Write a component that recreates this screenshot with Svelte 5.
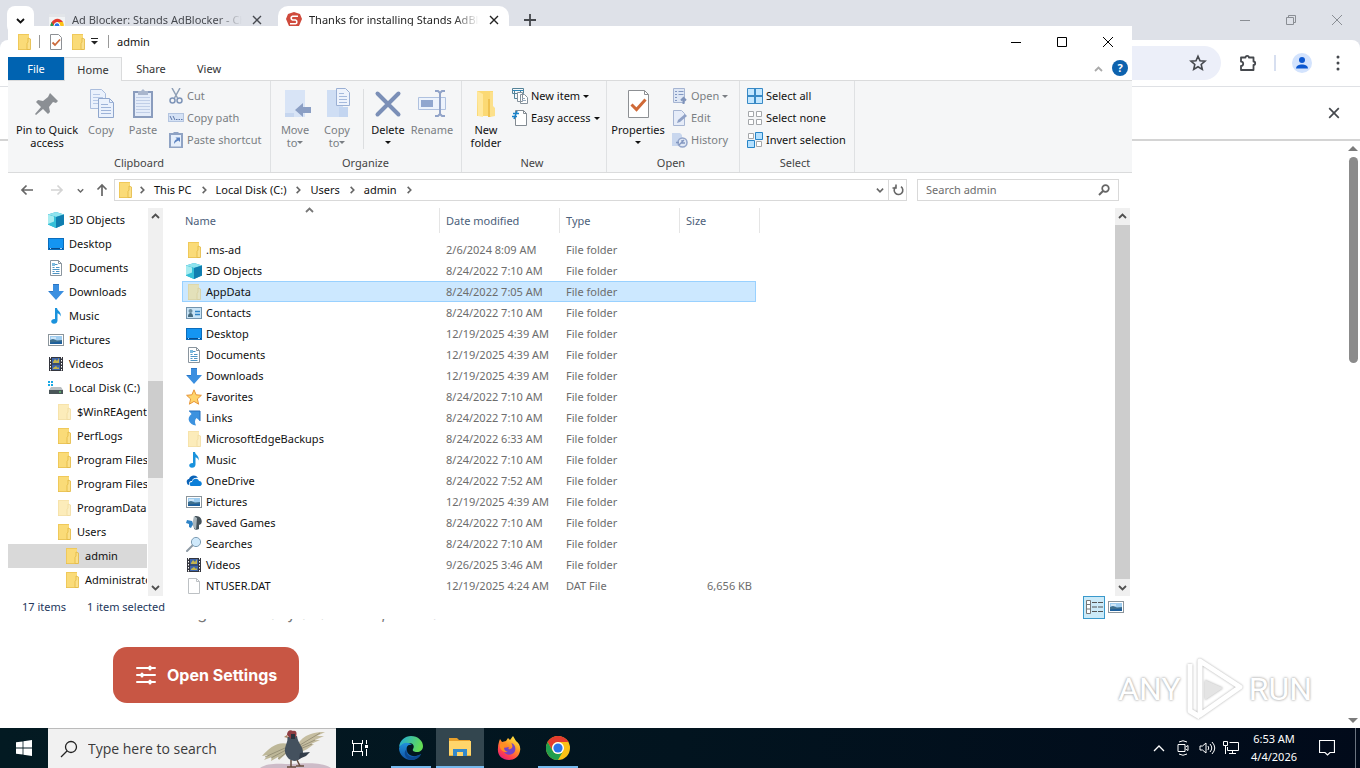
<script>
  const tree = [
    { name: '3D Objects', icon: 'cube', level: 0 },
    { name: 'Desktop', icon: 'desktop', level: 0 },
    { name: 'Documents', icon: 'document', level: 0 },
    { name: 'Downloads', icon: 'download', level: 0 },
    { name: 'Music', icon: 'music', level: 0 },
    { name: 'Pictures', icon: 'picture', level: 0 },
    { name: 'Videos', icon: 'video', level: 0 },
    { name: 'Local Disk (C:)', icon: 'disk', level: 0 },
    { name: '$WinREAgent', icon: 'paleFolder', level: 1 },
    { name: 'PerfLogs', icon: 'folder', level: 1 },
    { name: 'Program Files', icon: 'folder', level: 1 },
    { name: 'Program Files (x86)', icon: 'folder', level: 1 },
    { name: 'ProgramData', icon: 'paleFolder', level: 1 },
    { name: 'Users', icon: 'folder', level: 1 },
    { name: 'admin', icon: 'folder', level: 2 },
    { name: 'Administrator', icon: 'folder', level: 2 }
  ];

  const files = [
    ['.ms-ad', 'folder', '2/6/2024 8:09 AM'],
    ['3D Objects', 'cube', '8/24/2022 7:10 AM'],
    ['AppData', 'paleFolder', '8/24/2022 7:05 AM'],
    ['Contacts', 'contact', '8/24/2022 7:10 AM'],
    ['Desktop', 'desktop', '12/19/2025 4:39 AM'],
    ['Documents', 'document', '12/19/2025 4:39 AM'],
    ['Downloads', 'download', '12/19/2025 4:39 AM'],
    ['Favorites', 'star', '8/24/2022 7:10 AM'],
    ['Links', 'link', '8/24/2022 7:10 AM'],
    ['MicrosoftEdgeBackups', 'paleFolder', '8/24/2022 6:33 AM'],
    ['Music', 'music', '8/24/2022 7:10 AM'],
    ['OneDrive', 'cloud', '8/24/2022 7:52 AM'],
    ['Pictures', 'picture', '12/19/2025 4:39 AM'],
    ['Saved Games', 'games', '8/24/2022 7:10 AM'],
    ['Searches', 'search', '8/24/2022 7:10 AM'],
    ['Videos', 'video', '9/26/2025 3:46 AM'],
    ['NTUSER.DAT', 'blank', '12/19/2025 4:24 AM', 'DAT File', '6,656 KB']
  ];

  const crumbs = ['This PC', 'Local Disk (C:)', 'Users', 'admin'];
  let selectedFile = $state('AppData');
  let selectedNode = $state('admin');
</script>

{#snippet icon(name)}
  <svg class="i16" viewBox="0 0 16 16" aria-hidden="true">
    {#if name === 'folder' || name === 'paleFolder'}
      <g opacity={name === 'folder' ? 1 : 0.5}>
        <path d="M2 0h11v16H2z" fill="#fadb78" />
        <path d="M2.500 0v16M2 .5h11" stroke="#f0c95a" fill="none" />
        <path d="M11 9.500l1-1.500V4l2.500 1v10.500H11z" fill="#fbe08a" stroke="#e2b740" stroke-width=".8" />
        <path d="M2 15.600h12" stroke="#e5bd4d" stroke-width=".8" />
      </g>
    {:else if name === 'cube'}
      <path d="M8 0l8 2.500v10L8 16l-8-3.500v-10z" fill="#20a9cf" />
      <path d="M0 2.500L8 0l8 2.500L8 5z" fill="#8fe3ee" />
      <path d="M0 2.500L8 5v11l-8-3.500z" fill="#35c0d8" />
      <path d="M8 5l8-2.500v10L8 16z" fill="#107eb0" />
      <path d="M0 2.500l6 2v5L0 12z" fill="#a7ecf0" />
    {:else if name === 'desktop'}
      <rect x=".5" y="2.500" width="15" height="11" fill="#1495f2" stroke="#0b6dbc" />
      <path d="M1 12.500h14" stroke="#0a4c8c" />
      <path d="M2 12.500h1M12 12.500h2" stroke="#9fd4ff" />
    {:else if name === 'document'}
      <path d="M2.500 .5h8l3 3v12h-11z" fill="#fff" stroke="#8a959e" />
      <path d="M10.500 .5v3h3" fill="none" stroke="#8a959e" />
      <path d="M7 4.500h2.500M4.500 7.500h2M8 7.500h3.500M4.500 9.500h7M4.500 11.500h2M8 11.500h3.500M4.500 13.500h7" stroke="#4d94c4" />
      <path d="M4 3h3v3H4z" fill="#7cbbe0" />
    {:else if name === 'download'}
      <path d="M5 0h6v7h5l-8 9-8-9h5z" fill="#3b8fe0" />
      <path d="M5 .5h6M1 7.500h4" stroke="#2a75c4" />
    {:else if name === 'music'}
      <path d="M7 0h2c.3 3 4.600 3.600 3.600 8.600-.6-2-1.600-3-3.100-3.400v7.300c0 2-1.500 3.300-3.500 3.300-1.800 0-2.800-1-2.800-2.200 0-1.600 1.800-2.800 3.800-2.400z" fill="#1a92dc" />
    {:else if name === 'picture'}
      <rect x=".5" y="2.500" width="15" height="11" fill="#fff" stroke="#8b959c" />
      <path d="M2 4h12v8H2z" fill="#9fcdf0" />
      <path d="M2 8l3-1 4 1.500 5-.5v4H2z" fill="#3f6f8d" />
      <path d="M2 10.500l12-1V12H2z" fill="#1d5f9c" />
      <path d="M3 6h5" stroke="#fff" />
    {:else if name === 'video'}
      <path d="M1 1h14v14H1z" fill="#33353d" />
      <path d="M2.500 1v14M13.500 1v14" stroke="#fff" stroke-dasharray="1.500 1.500" />
      <path d="M4 2h8v5.500H4zM4 8.500h8V14H4z" fill="#3d65ad" />
      <path d="M5 6l2-3 2 2 2-3v5H5zM5 12l3-2 2 2 1-1v2H5z" fill="#c3b44d" />
    {:else if name === 'disk'}
      <path d="M0 1h2v2H0zM3 1h2v2H3zM0 4h2v2H0zM3 4h2v2H3z" fill="#19a9e5" />
      <path d="M3 7h10l2 3H1z" fill="#b9bec1" />
      <path d="M1 10h14v4H1z" fill="#4a5558" />
      <path d="M11 12h2" stroke="#69ee78" />
    {:else if name === 'contact'}
      <rect x=".5" y="2.500" width="15" height="11" fill="#c9e4f6" stroke="#7394ad" />
      <path d="M2 12c0-3 1-4 2.500-4S7 9 7 12z" fill="#466b80" />
      <circle cx="4.500" cy="6" r="2" fill="#6d8fa2" />
      <path d="M9 6.500h5M9 9.500h5" stroke="#2f83c6" stroke-width="1.500" />
    {:else if name === 'star'}
      <path d="M8 .8l2.100 5 5.300.5-4 3.600 1.200 5.300L8 12.400l-4.600 2.800 1.200-5.300-4-3.600 5.300-.5z" fill="#ffd46c" stroke="#e6953a" />
    {:else if name === 'link'}
      <path d="M3 1h11v10l-3.500-3c-1.800 1.600-2 4.500-.5 7.500C3 14.500 0 8.500 5.500 4z" fill="#3c92df" />
      <path d="M3 1h11v10" fill="none" stroke="#2471c0" />
    {:else if name === 'cloud'}
      <path d="M1 10c-1-3 1-4 2-4 1-4 7-5 9-1-3-1-6 1-6 3-3 0-3 2-3 4-1 0-2-1-2-2z" fill="#0a63b8" />
      <path d="M5 13c-2-1-2-4 1-4 1-4 6-4 7-1 3 0 4 4 1 5z" fill="#0c7fd8" />
    {:else if name === 'games'}
      <path d="M9 1c6-1 8 5 6 8l-2 1v4c-3 2-6 0-5-3z" fill="#45525a" />
      <path d="M8 1l3 2-1 12-4-5z" fill="#a9b6bd" />
      <path d="M1 5l5 1 1 3-2 4-2-1V9L0 8z" fill="#2f83c6" />
    {:else if name === 'search'}
      <path d="M1 15l6-6" stroke="#8d9aa5" stroke-width="2" stroke-linecap="round" />
      <circle cx="10" cy="6" r="4.600" fill="#cfe9fb" stroke="#7e9db4" />
    {:else if name === 'blank'}
      <path d="M2.500 .5h8l3 3v12h-11z" fill="#fff" stroke="#bdc1c4" />
      <path d="M10.500 .5v3h3" fill="none" stroke="#bdc1c4" />
    {:else if name === 'properties'}
      <path d="M2.500 .5h8l3 3v12h-11z" fill="#fff" stroke="#8d9094" />
      <path d="M4.500 8.500L7 11l5-5.500" fill="none" stroke="#cb6b3c" stroke-width="1.800" />
    {:else if name === 'cut'}
      <path d="M4 0l5.500 10M12 0L6.500 10" stroke="#8e9fb5" stroke-width="1.500" />
      <circle cx="4.500" cy="12.500" r="2.500" fill="none" stroke="#7f95b8" stroke-width="1.500" />
      <circle cx="11.500" cy="12.500" r="2.500" fill="none" stroke="#7f95b8" stroke-width="1.500" />
    {:else if name === 'path'}
      <rect x=".5" y="3.500" width="15" height="8" fill="#d5e2f5" stroke="#b4c5e0" />
      <path d="M2 6l2 4M5 6l2 4M8 9.500h1.500M10.500 9.500H12M13 9.500h1.500" stroke="#5c76a8" />
    {:else if name === 'shortcut'}
      <path d="M2 2h12v13.500H2z" fill="#e6effb" stroke="#8fa3c4" stroke-width="2" />
      <path d="M5.500 0h5v3h-5z" fill="#8fa3c4" />
      <path d="M6 12c0-3 1-4 3-5L7.500 5.500H12V10l-1.500-1.500C8 9.500 7.500 10 6 12z" fill="#5b82c0" />
    {:else if name === 'newItem'}
      <path d="M.5 .5h11v5H.5zM2.500 2.500h6v8h-6z" fill="#f5f8fb" stroke="#558398" />
      <path d="M1 2.500h10" stroke="#2c86b8" />
      <path d="M5.500 4.500h5v9h-5zM8.500 6.500h4l3 3v6h-7z" fill="#fff" stroke="#85919b" />
      <path d="M10 10.500h3M10 12.500h4" stroke="#96a8bb" />
    {:else if name === 'easy'}
      <path d="M3.500 .5h8l3 3v12h-11z" fill="#fff" stroke="#838b92" />
      <path d="M11.500 .5v3h3" fill="none" stroke="#838b92" />
      <path d="M1 3.500h6M0 6.500h5M5 1L2 9" stroke="#1a82c9" stroke-width="1.500" />
    {:else if name === 'openDoc'}
      <path d="M1.500 .5h11v14h-11z" fill="#dee7f5" stroke="#a6b5d2" />
      <path d="M3 3.500h2M3 6.500h2M3 9.500h2M3 12.500h2M6.500 3.500h5M6.500 6.500h5" stroke="#8398c2" />
      <path d="M11.500 16v-6M9 12.500L11.500 10l2.500 2.500" fill="none" stroke="#7f93ba" stroke-width="2" />
    {:else if name === 'edit'}
      <path d="M1.500 .5h8l3 3v12h-11z" fill="#e6ecf8" stroke="#a6b5d2" />
      <path d="M5 13l1-3 7-6 2 2-7 6z" fill="#8fa1c6" />
    {:else if name === 'history'}
      <path d="M0 1h8l2 2v11H0z" fill="#c9d7ee" />
      <circle cx="10.500" cy="10.500" r="4.500" fill="#e0e8f5" stroke="#93a5ca" stroke-width="1.500" />
      <path d="M4 10.500h3M10 8v3h3M12 8l-5 5" stroke="#8397c0" fill="none" stroke-width="1.300" />
    {:else if name === 'selectAll'}
      <path d="M.5 .5h15v15H.5z" fill="#c3e7ff" stroke="#3889c5" />
      <path d="M8 1v14M1 8h14" stroke="#3889c5" stroke-width="2" />
    {:else if name === 'selectNone'}
      <path d="M1.500 1.500h5v5h-5zM9.500 1.500h5v5h-5zM1.500 9.500h5v5h-5zM9.500 9.500h5v5h-5z" fill="#fff" stroke="#a4a7aa" />
    {:else if name === 'invert'}
      <path d="M1.500 1.500h5v5h-5zM9.500 9.500h5v5h-5z" fill="#fff" stroke="#a4a7aa" />
      <path d="M8.500 .5h7v7h-7zM.5 8.500h7v7h-7z" fill="#b5e1ff" stroke="#2784c7" />
    {/if}
  </svg>
{/snippet}

{#snippet bigIcon(name)}
  <svg class="i32" viewBox="0 0 32 32" aria-hidden="true">
    {#if name === 'pin'}
      <path d="M19 5l8 8-2 2-3-1-4 5 1 5-2 2-5-5-7 6-1-1 6-7-5-5 2-2 5 1 5-4z" fill="#8b8f94" />
    {:else if name === 'copy'}
      <path d="M5.500 1.500h11l4 4v15h-15z" fill="#eaf1fc" stroke="#aabddd" />
      <path d="M8 6.500h7M8 9.500h10M8 12.500h10M8 15.500h10" stroke="#b6c8e6" />
      <path d="M13.500 10.500h11l4 4v15h-15z" fill="#eaf1fc" stroke="#8fa6cc" />
      <path d="M24.500 10.500v4h4M16 16.500h7M16 19.500h10M16 22.500h10M16 25.500h10" stroke="#9db3d8" fill="none" />
    {:else if name === 'paste'}
      <path d="M7 4h18v25H7z" fill="#e4ecf9" stroke="#8a9cbd" stroke-width="2" />
      <path d="M11 3h3l2-2 2 2h3v4H11z" fill="#a9b6cd" />
      <path d="M9 9.500h14M9 12.500h14M9 15.500h14M9 18.500h14M9 21.500h14M9 24.500h14" stroke="#c0cee7" />
    {:else if name === 'move'}
      <path d="M6 2h20v27H6z" fill="#d8e4f6" />
      <path d="M6 25h9v4H6z" fill="#c6d6ef" />
      <path d="M16 22l8-7v4h8v6h-8v4z" fill="#8b9fc4" />
    {:else if name === 'copyTo'}
      <path d="M6 2h16v27H6z" fill="#cfdef4" />
      <path d="M15.500 .5h9l4 4v13h-13z" fill="#eef3fc" stroke="#9bb0d4" />
      <path d="M18 5.500h5M18 8.500h8M18 11.500h8M18 14.500h8" stroke="#a5badd" />
      <path d="M18 19h9v10H18z" fill="#c3d5f0" />
    {:else if name === 'delete'}
      <path d="M5.500 5.500l21 21M26.500 5.500l-21 21" stroke="#7b8fb7" stroke-width="4" stroke-linecap="round" />
    {:else if name === 'rename'}
      <path d="M2.500 9.500h27v12h-27z" fill="#edf3fc" stroke="#afc1df" />
      <path d="M5 12h12v7H5z" fill="#91a7cf" />
      <path d="M19 3h3l2 2 2-2h3M19 28h3l2-2 2 2h3M24 5v21" fill="none" stroke="#91a3c8" stroke-width="2" />
    {:else if name === 'newFolder'}
      <path d="M7 3h16v25H7z" fill="#fbd974" />
      <path d="M7 3l6 3v23l-5-1z" fill="#ffe89e" />
      <path d="M18 11h3v18h-3z" fill="#efc251" />
      <path d="M20 4h3v14l2 2v8l-5 1z" fill="#fce08b" />
    {:else if name === 'properties'}
      <path d="M6.500 2.500h16l4 4v23h-20z" fill="#fff" stroke="#8d9094" />
      <path d="M22.500 2.500v4h4" fill="none" stroke="#8d9094" />
      <path d="M9.500 16.500l5 5 9-10" fill="none" stroke="#cf6937" stroke-width="3" />
    {/if}
  </svg>
{/snippet}

{#snippet cross(size)}
  <svg width={size} height={size} viewBox="0 0 10 10" aria-hidden="true"><path d="M1 1l8 8M9 1L1 9" stroke="currentColor" stroke-width="1.400" /></svg>
{/snippet}

{#snippet chev(dir)}
  <svg class="chev {dir}" width="9" height="9" viewBox="0 0 9 9" aria-hidden="true"><path d="M1 3l3.500 3.500L8 3" fill="none" stroke="currentColor" stroke-width="1.800" /></svg>
{/snippet}

{#snippet big(name, first, second, off, arrow)}
  <button class="big" class:off aria-label={[first, second].filter(Boolean).join(' ')}>
    {@render bigIcon(name)}
    <span>{first}</span>
    {#if second || arrow}
      <span>{second}{#if arrow}<i class="tri"></i>{/if}</span>
    {/if}
  </button>
{/snippet}

{#snippet small(name, text, off, arrow)}
  <button class="small" class:off>{@render icon(name)}<span>{text}</span>{#if arrow}<i class="tri"></i>{/if}</button>
{/snippet}

{#snippet chromeLogo(size)}
  <svg width={size} height={size} viewBox="0 0 24 24" aria-hidden="true">
    <circle cx="12" cy="12" r="12" fill="#fbc116" />
    <path d="M1.600 6A12 12 0 0 1 22.400 6H12a6 6 0 0 0-5.200 9z" fill="#e33b2e" />
    <path d="M1.600 6A12 12 0 0 0 12 24l5.200-9A6 6 0 0 1 6.800 15z" fill="#229e4d" />
    <circle cx="12" cy="12" r="6" fill="#fff" />
    <circle cx="12" cy="12" r="4.600" fill="#2b74e8" />
  </svg>
{/snippet}

<div class="desktop">
  <section class="browser" aria-label="Browser">
    <div class="tabstrip">
      <button class="tabsearch" aria-label="Search tabs">{@render chev('down')}</button>
      <div class="tab">
        <svg width="16" height="16" viewBox="0 0 16 16" aria-hidden="true">
          <path d="M0 2h16v14H0z" fill="#f1f3f5" />
          <path d="M0 2h16v3H0z" fill="#e2e5e9" />
          <path d="M2 16a6.500 6.500 0 0 1 .8-6A6.500 6.500 0 0 1 14 10H8z" fill="#e33b2e" />
          <path d="M2 16a6.500 6.500 0 0 1 .6-6L6 16z" fill="#229e4d" />
          <path d="M9 10h5a6.500 6.500 0 0 1 .2 6H10z" fill="#fbc116" />
          <circle cx="8" cy="13.500" r="2.800" fill="#2b74e8" stroke="#fff" />
        </svg>
        <span class="tabtitle">Ad Blocker: Stands AdBlocker - Chrome</span>
        <button aria-label="Close tab">{@render cross(10)}</button>
      </div>
      <div class="tab active">
        <svg width="16" height="16" viewBox="0 0 16 16" aria-hidden="true">
          <path d="M8 0l6 2 2 5-3 7-5 2-5-2-3-7 2-5z" fill="#cf4a3c" />
          <path d="M12 4.200H6.500a2 2 0 0 0 0 3.800h3a2 2 0 0 1 0 3.800H4" fill="none" stroke="#fff" stroke-width="1.600" />
        </svg>
        <span class="tabtitle">Thanks for installing Stands AdBlocker</span>
        <button aria-label="Close tab">{@render cross(10)}</button>
      </div>
      <button class="newtab" aria-label="New tab"><svg width="12" height="12" viewBox="0 0 12 12"><path d="M6 0v12M0 6h12" stroke="currentColor" stroke-width="1.800" /></svg></button>
      <div class="controls">
        <button aria-label="Minimize"><svg width="12" height="12" viewBox="0 0 12 12"><path d="M1 6.500h10" stroke="currentColor" /></svg></button>
        <button aria-label="Restore"><svg width="12" height="12" viewBox="0 0 12 12"><path d="M1.500 3.500h7v7h-7zM3.500 3.500v-2h7v7h-2" fill="none" stroke="currentColor" /></svg></button>
        <button aria-label="Close"><svg width="12" height="12" viewBox="0 0 12 12"><path d="M1 1l10 10M11 1L1 11" stroke="currentColor" /></svg></button>
      </div>
    </div>
    <div class="toolbar">
      <div class="omnibox">
        <button aria-label="Bookmark this tab"><svg width="18" height="18" viewBox="0 0 18 18"><path d="M9 2.200l2 4.600 5 .4-3.800 3.300 1.100 4.900L9 12.800l-4.300 2.600 1.100-4.900L2 7.200l5-.4z" fill="none" stroke="currentColor" stroke-width="1.600" /></svg></button>
      </div>
      <button class="tool" aria-label="Extensions"><svg width="18" height="18" viewBox="0 0 18 18"><path d="M2 3.500h4.500a1.700 1.700 0 0 1 3.400 0H14.500v4a1.700 1.700 0 0 1 0 3.400V16H2v-4a2.200 2.200 0 0 0 0-4.400z" fill="none" stroke="currentColor" stroke-width="1.800" stroke-linejoin="round" /></svg></button>
      <span class="divider"></span>
      <button class="avatar" aria-label="Profile"><svg width="20" height="20" viewBox="0 0 20 20"><circle cx="10" cy="10" r="10" fill="#d3e3fd" /><circle cx="10" cy="7" r="3" fill="#0b57d0" /><path d="M4 15.500c0-5.500 12-5.500 12 0z" fill="#0b57d0" /></svg></button>
      <button class="tool" aria-label="Menu"><svg width="4" height="16" viewBox="0 0 4 16"><path d="M2 2h0M2 8h0M2 14h0" stroke="currentColor" stroke-width="3" stroke-linecap="round" /></svg></button>
    </div>
    <div class="banner"><button aria-label="Dismiss">{@render cross(12)}</button></div>
    <div class="page">
      <main>
        <p>Customizing this is easy at all times, even at home</p>
        <button class="cta">
          <svg width="22" height="20" viewBox="0 0 22 20" aria-hidden="true"><path d="M2 3h18M2 10h18M2 17h18" stroke="#fff" stroke-width="2" stroke-linecap="round" /><path d="M15 2v2M7 9v2M15 16v2" stroke="#fff" stroke-width="3" stroke-linecap="round" /></svg>
          <span>Open Settings</span>
        </button>
      </main>
      <div class="watermark" aria-label="ANY RUN">
        <span>ANY</span>
        <svg width="60" height="66" viewBox="0 0 60 66" aria-hidden="true">
          <g fill="none" stroke="#fff" stroke-width="5" stroke-linejoin="round"><path d="M15 5l40 26-40 28z" /><path d="M5 8v47l10 6" /><path d="M20 24l18 8-18 12z" fill="#e4e4e4" stroke="none" /></g>
        </svg>
        <span>RUN</span>
      </div>
      <div class="pagescroll"><i class="up"></i><b></b><i class="dn"></i></div>
    </div>
  </section>

  <section class="explorer" aria-label="File Explorer">
    <header class="titlebar">
      {@render icon('folder')}<span class="bar"></span>
      <button aria-label="Properties">{@render icon('properties')}</button>
      <button aria-label="New folder">{@render icon('folder')}</button>
      <button class="qat" aria-label="Customize toolbar"><svg width="9" height="9" viewBox="0 0 9 9"><path d="M1 1.500h7" stroke="#222" /><path d="M1 4h7L4.500 7.500z" fill="#222" /></svg></button>
      <span class="bar"></span>
      <h1>admin</h1>
      <div class="controls">
        <button aria-label="Minimize"><svg width="12" height="12" viewBox="0 0 12 12"><path d="M1 6.500h10" stroke="currentColor" /></svg></button>
        <button aria-label="Maximize"><svg width="12" height="12" viewBox="0 0 12 12"><path d="M1.500 1.500h9v9h-9z" fill="none" stroke="currentColor" /></svg></button>
        <button aria-label="Close"><svg width="12" height="12" viewBox="0 0 12 12"><path d="M1 1l10 10M11 1L1 11" stroke="currentColor" /></svg></button>
      </div>
    </header>

    <nav class="tabs">
      <button class="file">File</button>
      <button class="home">Home</button>
      <button>Share</button>
      <button>View</button>
      <span class="grow"></span>
      <button class="fold" aria-label="Collapse ribbon">{@render chev('upward')}</button>
      <button class="help" aria-label="Help">?</button>
    </nav>

    <div class="ribbon">
      <div class="group clip">
        <div class="tools">
          {@render big('pin', 'Pin to Quick', 'access', false, false)}
          {@render big('copy', 'Copy', '', true, false)}
          {@render big('paste', 'Paste', '', true, false)}
          <div class="stack">
            {@render small('cut', 'Cut', true, false)}
            {@render small('path', 'Copy path', true, false)}
            {@render small('shortcut', 'Paste shortcut', true, false)}
          </div>
        </div>
        <h2>Clipboard</h2>
      </div>
      <div class="group organize">
        <div class="tools">
          {@render big('move', 'Move', 'to', true, true)}
          {@render big('copyTo', 'Copy', 'to', true, true)}
          <span class="split"></span>
          {@render big('delete', 'Delete', '', false, true)}
          {@render big('rename', 'Rename', '', true, false)}
        </div>
        <h2>Organize</h2>
      </div>
      <div class="group new">
        <div class="tools">
          {@render big('newFolder', 'New', 'folder', false, false)}
          <div class="stack">
            {@render small('newItem', 'New item', false, true)}
            {@render small('easy', 'Easy access', false, true)}
          </div>
        </div>
        <h2>New</h2>
      </div>
      <div class="group open">
        <div class="tools">
          {@render big('properties', 'Properties', '', false, true)}
          <div class="stack">
            {@render small('openDoc', 'Open', true, true)}
            {@render small('edit', 'Edit', true, false)}
            {@render small('history', 'History', true, false)}
          </div>
        </div>
        <h2>Open</h2>
      </div>
      <div class="group select">
        <div class="tools">
          <div class="stack">
            {@render small('selectAll', 'Select all', false, false)}
            {@render small('selectNone', 'Select none', false, false)}
            {@render small('invert', 'Invert selection', false, false)}
          </div>
        </div>
        <h2>Select</h2>
      </div>
    </div>

    <div class="location">
      <div class="nav">
        <button aria-label="Back"><svg width="14" height="12" viewBox="0 0 14 12"><path d="M13 6H2M6.500 1.500L2 6l4.500 4.500" fill="none" stroke="#666" stroke-width="1.700" /></svg></button>
        <button aria-label="Forward"><svg width="14" height="12" viewBox="0 0 14 12"><path d="M1 6h11M7.500 1.500L12 6l-4.500 4.500" fill="none" stroke="#d4d4d4" stroke-width="1.700" /></svg></button>
        <button class="recent" aria-label="Recent locations">{@render chev('down')}</button>
        <button class="upbtn" aria-label="Up"><svg width="12" height="14" viewBox="0 0 12 14"><path d="M6 13V2M1.500 6.500L6 2l4.500 4.500" fill="none" stroke="#666" stroke-width="1.700" /></svg></button>
      </div>
      <div class="address">
        {@render icon('folder')}
        {@render chev('right')}
        {#each crumbs as crumb}
          <button class="crumb">{crumb}</button>
          {@render chev('right')}
        {/each}
        <span class="grow"></span>
        <button class="drop" aria-label="Previous locations">{@render chev('down')}</button>
        <button class="refresh" aria-label="Refresh"><svg width="12" height="12" viewBox="0 0 12 12"><path d="M9 2.700A4.300 4.300 0 1 1 3.500 3.100M4 .5V4H.5" fill="none" stroke="#666" stroke-width="1.600" /></svg></button>
      </div>
      <label class="find">
        <input type="text" placeholder="Search admin" aria-label="Search admin" />
        <svg width="12" height="12" viewBox="0 0 12 12" aria-hidden="true"><circle cx="7.500" cy="4.500" r="3.300" fill="none" stroke="#666" stroke-width="1.700" /><path d="M5 7L1 11" stroke="#666" stroke-width="2" /></svg>
      </label>
    </div>

    <div class="content">
      <ul class="tree">
        {#each tree as node}
          <li>
            <button class="node l{node.level}" class:current={node.name === selectedNode} onclick={() => (selectedNode = node.name)}>
              {@render icon(node.icon)}<span>{node.name}</span>
            </button>
          </li>
        {/each}
      </ul>
      <div class="scroll side">
        <button aria-label="Scroll up">{@render chev('upward')}</button>
        <span class="before"></span><b></b><span class="after"></span>
        <button aria-label="Scroll down">{@render chev('down')}</button>
      </div>
      <div class="list">
        <span class="sort">{@render chev('upward')}</span>
        <table>
          <colgroup><col class="c1" /><col class="c2" /><col class="c2" /><col class="c3" /><col class="c4" /></colgroup>
          <thead>
            <tr><th><div>Name</div></th><th><div>Date modified</div></th><th><div>Type</div></th><th colspan="2"><div>Size</div></th></tr>
          </thead>
          <tbody>
            {#each files as [name, kind, date, type = 'File folder', size = '']}
              <tr class:selected={name === selectedFile} onclick={() => (selectedFile = name)}>
                <td><div class="cell">{@render icon(kind)}<span>{name}</span></div></td>
                <td>{date}</td>
                <td>{type}</td>
                <td class="size">{size}</td>
                <td class="edge"></td>
              </tr>
            {/each}
          </tbody>
        </table>
      </div>
      <div class="scroll main">
        <button aria-label="Scroll up">{@render chev('upward')}</button>
        <b></b>
        <button aria-label="Scroll down">{@render chev('down')}</button>
      </div>
    </div>

    <footer class="status">
      <span>17 items</span>
      <span>1 item selected</span>
      <span class="grow"></span>
      <button class="details" aria-label="Details view"><svg width="18" height="16" viewBox="0 0 18 16"><path d="M1.500 1.500h4v13h-4zM1.500 5.500h4M1.500 10h4" fill="#fff" stroke="#777" /><path d="M7 3.500h5M13 3.500h5M7 8h5M13 8h5M7 12.500h5M13 12.500h5" stroke="#555" /></svg></button>
      <button class="thumbs" aria-label="Large icons view">{@render icon('picture')}</button>
    </footer>
  </section>

  <footer class="taskbar">
    <button class="start" aria-label="Start"><svg width="16" height="16" viewBox="0 0 16 16"><path d="M0 2.300L6.600 1.400v6.200H0zM7.400 1.300L16 0v7.600H7.400zM0 8.400h6.600v6.200L0 13.700zM7.400 8.400H16V16l-8.600-1.300z" fill="#fff" /></svg></button>
    <label class="tasksearch">
      <svg width="18" height="18" viewBox="0 0 18 18" aria-hidden="true"><circle cx="11" cy="7" r="5.500" fill="none" stroke="#222" stroke-width="1.300" /><path d="M7 11l-6 6" stroke="#222" stroke-width="1.300" /></svg>
      <input type="text" placeholder="Type here to search" aria-label="Type here to search" />
      <svg class="bird" width="78" height="39" viewBox="0 0 78 39" aria-hidden="true">
        <path d="M4 39c8-6 22-4 31-4 12 0 28-3 40 4z" fill="#cdbcc8" />
        <path d="M41 16C48 5 58 3 69 3l-8 4h7l-9 4h5l-9 4h3c-5 4-9 7-15 8z" fill="#c5bda0" />
        <path d="M44 16L64 4M44 18l15-7M44 20l12-5" stroke="#8e8770" stroke-width=".8" />
        <path d="M32 15c-10-3-19 4-26 12l6-1-4 5 8-3-1 4 7-4 1 3 8-7z" fill="#bdb798" />
        <path d="M29 19L9 28M30 21L15 29M31 23l-9 7" stroke="#8d886f" stroke-width=".8" />
        <path d="M31 8c2 4-3 9-2 15 1 5 5 9 10 9 5-1 8-4 8-9 0-6-5-8-6-16z" fill="#44515e" />
        <path d="M44 24l10-1-4 4-7 3z" fill="#323c49" />
        <path d="M31 6c0-4 3-6 6-4 4-1 4 3 3 6l-5 2z" fill="#8f3d42" />
        <path d="M35 5h4v5h-4z" fill="#28323d" /><path d="M31 6l-3 2 4 1z" fill="#a98360" />
        <path d="M35 31v7M41 31l3 6M31 38h9M40 37h8" stroke="#674c3d" stroke-width="1.500" />
      </svg>
    </label>
    <button class="app taskview" aria-label="Task view"><svg width="18" height="16" viewBox="0 0 18 16"><path d="M1.500 0v3M11.500 0v3M1 3.500h11M2.500 3.500v8M10.500 3.500v8M1 11.500h11M1.500 12v4M11.500 12v4M15.500 0v4M15.500 9v7" fill="none" stroke="#fff" /><path d="M14 5h3v3h-3z" fill="#fff" /></svg></button>
    <button class="app run" aria-label="Microsoft Edge">
      <svg width="24" height="24" viewBox="0 0 24 24">
        <defs><linearGradient id="edgeA" x1="0" y1="0" x2="1" y2=".3"><stop offset="0" stop-color="#1fa9e0" /><stop offset="1" stop-color="#63dc55" /></linearGradient><linearGradient id="edgeB" x1="0" y1="0" x2="0" y2="1"><stop offset="0" stop-color="#2190db" /><stop offset="1" stop-color="#1053a4" /></linearGradient></defs>
        <path d="M0 11C1 4 6 0 12 0c7 0 12 5 12 10 0 4-3 6-6 6s-5-1-4-3c2-3 0-6-4-6-5 0-8 3-10 4z" fill="url(#edgeA)" />
        <path d="M0 12c2-5 9-7 13-3-5-1-6 3-5 6 1 5 8 7 14 3-2 4-6 6-10 6C5 24 0 18 0 12z" fill="url(#edgeB)" />
        <path d="M8 13c-2 7 5 11 14 5-3 6-10 8-14 4-3-3-3-7 0-9z" fill="#0c4890" />
      </svg>
    </button>
    <button class="app focus" aria-label="File Explorer">
      <svg width="24" height="22" viewBox="0 0 24 22"><path d="M1 2h8l2 2h11v5H1z" fill="#e9a12c" /><path d="M1 5h22v15H1z" fill="#ffd56b" /><path d="M5 20v-7h14v7h-4v-4H9v4z" fill="#3589c9" /><path d="M1 19h4v1H1zM19 19h4v1h-4z" fill="#e7b13c" /></svg>
    </button>
    <button class="app" aria-label="Firefox">
      <svg width="24" height="24" viewBox="0 0 24 24">
        <defs><linearGradient id="fox" x1=".8" y1="0" x2=".2" y2="1"><stop offset="0" stop-color="#fff048" /><stop offset=".4" stop-color="#ff9a24" /><stop offset=".75" stop-color="#ff414c" /><stop offset="1" stop-color="#df1a83" /></linearGradient></defs>
        <path d="M3 3l2 3 4-1 2-3 2 2 3-4 3 5c3 2 5 6 4 10-1 6-6 9-11 9C5 24 0 19 1 12c0-4 1-6 2-9z" fill="url(#fox)" />
        <path d="M7 12l5-1c-2 3 1 3 3 1 1-2 0-4-1-5 4 1 5 5 4 8-2 5-10 5-11 0z" fill="#7444c7" />
        <path d="M3 8c3-2 5 0 7 2l-3 1c0 3 1 4 4 5-5 1-9-3-8-8z" fill="#ff8f22" />
      </svg>
    </button>
    <button class="app run" aria-label="Google Chrome">{@render chromeLogo(24)}</button>
    <span class="grow"></span>
    <div class="tray">
      <button aria-label="Show hidden icons"><svg width="12" height="8" viewBox="0 0 12 8"><path d="M1 7l5-5 5 5" fill="none" stroke="#fff" stroke-width="1.300" /></svg></button>
      <button aria-label="Meet now"><svg width="12" height="16" viewBox="0 0 12 16"><path d="M1 4.500h7v7H1zM8.500 7L11 5.500v5L8.500 9M2 2q4-2.500 8 0M2 14q4 2.500 8 0" fill="none" stroke="#fff" /></svg></button>
      <button aria-label="Volume"><svg width="17" height="14" viewBox="0 0 17 14"><path d="M1 5h2.500L7 2v10L3.500 9H1zM9 5q1.500 2 0 4M11 3q3.500 4 0 8M13 1q5.500 6 0 12" fill="none" stroke="#fff" /></svg></button>
      <button aria-label="Network"><svg width="17" height="14" viewBox="0 0 17 14"><path d="M6.500 1.500h9v8h-11V6M6 12.500h7M9.500 10v2M.5 .5h4v4h-4zM2.500 5v8" fill="none" stroke="#fff" /></svg></button>
    </div>
    <button class="clock"><span>6:53 AM</span><span>4/4/2026</span></button>
    <button class="notes" aria-label="Notifications"><svg width="16" height="16" viewBox="0 0 16 16"><path d="M.5 .5h15v12H11L8.500 15 6 12.500H.5z" fill="none" stroke="#fff" stroke-width="1.200" /></svg></button>
    <span class="peek"></span>
  </footer>
</div>

<style>
  :global(body) { margin: 0; background: #fff; }
  .desktop { position: relative; display: flex; flex-direction: column; height: 100vh; overflow: hidden; font: 11px/16px "Noto Sans", "Open Sans", sans-serif; color: #111; }
  button { font: inherit; color: inherit; background: none; border: 0; padding: 0; margin: 0; display: flex; align-items: center; justify-content: center; white-space: nowrap; }
  svg { display: block; flex: none; }
  input { font: inherit; border: 0; background: none; padding: 0; outline: 0; min-width: 0; flex: 1; }
  input::placeholder { color: #6d6d6d; opacity: 1; }
  h1, h2, p, ul { margin: 0; padding: 0; font: inherit; list-style: none; }
  .i16 { width: 16px; height: 16px; }
  .i32 { width: 32px; height: 32px; }
  .grow { flex: 1; }
  .chev.upward { transform: rotate(180deg); }
  .chev.right { transform: rotate(-90deg); }

  .browser { flex: 1; display: flex; flex-direction: column; min-height: 0; background: #dee1e8; }
  .tabstrip { display: flex; height: 40px; box-sizing: border-box; padding-left: 7px; }
  .tabsearch { width: 27px; height: 28px; margin: 6px 7px 0 0; border-radius: 8px; background: #fff; }
  .tab { display: flex; align-items: center; gap: 7px; width: 231px; box-sizing: border-box; margin: 6px 6px 0 0; padding: 0 9px 6px 8px; color: #474a50; }
  .tab.active { background: #fff; border-radius: 10px 10px 0 0; color: #222; }
  .tabtitle { flex: 1; overflow: hidden; white-space: nowrap; -webkit-mask-image: linear-gradient(90deg, #000 85%, transparent); mask-image: linear-gradient(90deg, #000 85%, transparent); }
  .tab button { width: 12px; height: 16px; margin-left: 2px; }
  .newtab { width: 29px; color: #44474c; }
  .controls { display: flex; margin-left: auto; }
  .controls button { width: 46px; }
  .tabstrip .controls { color: #8a8e94; }
  .toolbar { display: flex; align-items: center; height: 47px; box-sizing: border-box; padding: 0 12px 0 100px; background: #fff; border-bottom: 1px solid #dfe1e5; border-radius: 8px 8px 0 0; color: #45484d; }
  .omnibox { flex: 1; display: flex; justify-content: flex-end; align-items: center; height: 34px; padding-right: 14px; border-radius: 17px; background: #eceff9; }
  .tool { width: 20px; height: 28px; margin-left: 17px; }
  .divider { width: 2px; height: 16px; margin: 0 16px; background: #d7dff0; }
  .avatar + .tool { margin-left: 16px; }
  .banner { display: flex; align-items: center; justify-content: flex-end; height: 52px; padding-right: 20px; background: #fff; border-bottom: 2px solid #d4d4d4; color: #45484d; }
  .page { flex: 1; display: flex; position: relative; min-height: 0; background: #fff; }
  main { flex: 1; padding: 461px 0 0 113px; font-family: Inter, sans-serif; }
  main p { font-size: 16px; line-height: 22px; color: #777; }
  .cta { gap: 10px; margin-top: 23px; height: 56px; padding: 0 22px; border-radius: 14px; background: #c85644; color: #fff; font-size: 16px; font-weight: 700; }
  .watermark { position: absolute; right: 48px; bottom: 6px; display: flex; align-items: center; gap: 4px; font: 32px/66px Roboto, sans-serif; color: #fff; text-shadow: 0 0 3px #aaa, 0 0 2px #bbb; }
  .watermark svg { filter: drop-shadow(0 0 1px #aaa); }
  .pagescroll { display: flex; flex-direction: column; align-items: center; width: 14px; padding: 5px 0; }
  .pagescroll b { width: 9px; height: 206px; margin-top: 6px; border-radius: 5px; background: #8b8b8b; }
  .pagescroll i { border: 5px solid transparent; width: 0; height: 0; border-top: 0; border-bottom: 5px solid #7b7b7b; }
  .pagescroll .dn { margin-top: auto; border-bottom: 0; border-top: 5px solid #7b7b7b; }

  .explorer { position: absolute; left: 8px; right: 228px; top: 26px; background: #fff; }
  .titlebar { display: flex; align-items: center; height: 31px; padding-left: 8px; }
  .bar { width: 1px; height: 13px; margin: 0 8px 0 7px; background: #999; }
  .titlebar > button { margin-right: 6px; }
  .titlebar .qat { margin: 0 2px 0 -2px; }
  .titlebar .controls { align-self: stretch; color: #000; margin-right: 1px; }
  .tabs { display: flex; height: 23px; color: #333; }
  .tabs button { width: 58px; padding-top: 1px; }
  .tabs .file { width: 56px; background: #0063b1; color: #fff; }
  .tabs .home { box-sizing: border-box; height: 24px; margin-bottom: -1px; padding: 0; background: #f5f6f7; border: 1px solid #dadbdc; border-bottom: 0; z-index: 1; }
  .tabs .fold { width: 20px; color: #aaa; }
  .tabs .help { width: 16px; height: 16px; margin: 3px 4px 0 4px; padding: 0; border-radius: 8px; background: #0d62ae; color: #fff; font-weight: 700; }
  .ribbon { display: flex; height: 93px; box-sizing: border-box; background: #f5f6f7; border: solid #dadbdc; border-width: 1px 0; }
  .group { display: flex; flex-direction: column; box-sizing: border-box; border-right: 1px solid #dfe1e3; flex: none; }
  .group h2 { text-align: center; line-height: 16px; padding: 0 4px 1px 0; color: #444; }
  .tools { display: flex; flex: 1; }
  .clip { width: 263px; padding-left: 4px; }
  .organize { width: 191px; padding-left: 3px; }
  .new { width: 145px; }
  .open { width: 133px; }
  .select { width: 115px; }
  .big { flex-direction: column; justify-content: flex-start; padding-top: 7px; width: 42px; line-height: 13px; }
  .big span { display: flex; align-items: center; min-height: 12px; }
  .big .i32 { margin-bottom: 3px; }
  .off { color: #7a7e83; }
  .clip .big:first-child { width: 70px; }
  .clip .big:nth-child(2) { width: 38px; }
  .clip .big:nth-child(3) { width: 46px; }
  .new .big { width: 48px; }
  .open .big { width: 62px; }
  .organize .split { width: 1px; height: 60px; margin: 8px 2px 0 5px; background: #dcdee0; }
  .organize .split ~ .big { width: 44px; }
  .stack { display: flex; flex-direction: column; align-items: flex-start; padding: 4px 0 0 2px; }
  .open .stack { padding-left: 3px; }
  .select .stack { padding-left: 7px; }
  .small { height: 22px; gap: 3px; }
  .tri { border: 3px solid transparent; border-top: 3px solid currentColor; border-bottom: 0; margin-left: 3px; }
  .small .tri, .big .tri:only-child { margin-left: 0; }
  .location { display: flex; align-items: center; height: 34px; padding: 0 13px 1px 12px; }
  .nav { display: flex; color: #666; width: 94px; }
  .nav button { width: 14px; height: 20px; margin-right: 16px; }
  .nav .recent { width: 9px; margin: 0 10px 0 -4px; }
  .nav .upbtn { margin: 0; }
  .nav .recent svg { width: 7px; }
  .address { flex: 1; display: flex; align-items: center; height: 20px; border: 1px solid #d9d9d9; padding-left: 2px; color: #666; }
  .address .i16 { margin-right: 5px; }
  .address .chev { width: 8px; height: 8px; }
  .crumb { margin: 0 8px; color: #111; }
  .drop { width: 16px; }
  .refresh { width: 18px; align-self: stretch; border-left: 1px solid #d9d9d9; }
  .find { display: flex; align-items: center; width: 184px; height: 20px; margin-left: 10px; padding: 0 8px; border: 1px solid #d9d9d9; }
  .content { display: flex; }
  .tree { width: 140px; }
  .node { width: 139px; height: 24px; gap: 5px; justify-content: flex-start; padding-left: 40px; overflow: hidden; }
  .l1 { padding-left: 48px; }
  .l2 { padding-left: 56px; }
  .current { background: #d9d9d9; }
  .scroll { display: flex; flex-direction: column; width: 15px; background: #f0f0f0; color: #505050; }
  .scroll button { height: 17px; }
  .scroll b { background: #cdcdcd; flex: 96; }
  .before { flex: 156; }
  .after { flex: 101; }
  .main { margin-right: 2px; }
  .list { position: relative; flex: 1; padding-left: 19px; }
  .sort { position: absolute; left: 142px; top: -2px; color: #777; }
  table { border-collapse: separate; border-spacing: 0; table-layout: fixed; width: 578px; color: #6d6d6d; }
  .c1 { width: 258px; }
  .c2 { width: 120px; }
  .c3 { width: 76px; }
  .c4 { width: 4px; }
  th, td { padding: 0; text-align: left; font-weight: 400; }
  th { height: 31px; vertical-align: top; color: #4c607a; }
  th div { height: 25px; line-height: 25px; padding-left: 6px; border-right: 1px solid #e5e5e5; }
  th:first-child div { padding-left: 3px; }
  td { height: 21px; box-sizing: border-box; line-height: 19px; padding-left: 6px; border: solid transparent; border-width: 1px 0; white-space: nowrap; }
  td:first-child { padding-left: 3px; border-left-width: 1px; color: #111; }
  td.size { padding: 0 3px 0 0; text-align: right; border-right-width: 1px; }
  td.edge { padding: 0; }
  .selected td:not(.edge) { background: #cce8ff; border-color: #99d1ff; }
  .cell { display: flex; align-items: center; gap: 4px; }
  .status { display: flex; align-items: center; height: 22px; padding: 0 8px 1px 14px; color: #24375c; }
  .status > span:first-child { margin-right: 21px; }
  .details { width: 22px; height: 23px; box-sizing: border-box; border: 1px solid #3a99cc; background: #cbeaf8; }
  .thumbs { margin-left: 3px; }

  .taskbar { display: flex; align-items: center; height: 40px; color: #fff; background: linear-gradient(90deg, #031a22, #02141f 50%, #010a1a); }
  .taskbar > button { height: 40px; }
  .start { width: 48px; }
  .tasksearch { display: flex; align-items: center; width: 276px; height: 39px; padding-left: 12px; background: #f1f1f1; border-top: 1px solid #bbb; font: 14px/20px "Open Sans", sans-serif; }
  .tasksearch input { margin-left: 10px; }
  .tasksearch input::placeholder { color: #3b3b3b; }
  .tasksearch .bird { margin-right: 2px; }
  .app { width: 48px; margin-right: 1px; box-sizing: border-box; }
  .taskview { margin-right: 3px; }
  .focus { background: #33464f; border-bottom: 2px solid #76b9ed; }
  .run { background: linear-gradient(#76b9ed, #76b9ed) bottom / 40px 2px no-repeat; }
  .tray { display: flex; margin-right: 7px; }
  .tray button { width: 24px; height: 40px; }
  .clock { flex-direction: column; width: 48px; line-height: 18px; }
  .notes { width: 57px; }
  .peek { width: 4px; height: 40px; border-left: 1px solid #6b7480; }
</style>
